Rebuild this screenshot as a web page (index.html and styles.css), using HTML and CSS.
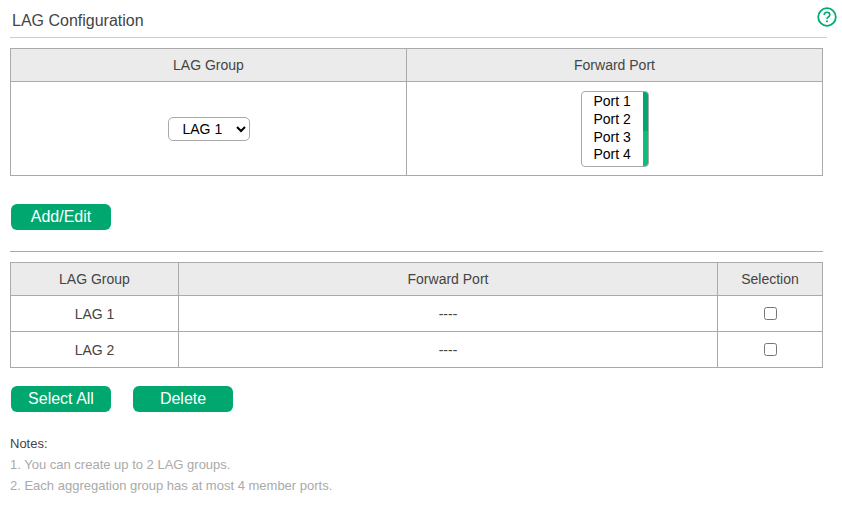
FILE: index.html
```html
<!DOCTYPE html>
<html>
    <head>
        <title>LAG Configuration</title>
        <meta charset="utf8"/>
        <link rel="stylesheet" href="styles.css">
    </head>
    <body>
        <div class="wrap">
            <div class="head">
                <h1>LAG Configuration</h1>
                <svg class="help" width="20" height="20" viewBox="0 0 20 20">
                    <circle cx="10" cy="10" r="8.8" fill="none" stroke="#00ab70" stroke-width="1.8"/>
                    <path d="M7.2 7.9c0-1.7 1.2-2.7 2.8-2.7s2.8 1 2.8 2.5c0 1.2-.7 1.8-1.5 2.3-.8.5-1.3 1-1.3 2" fill="none" stroke="#00ab70" stroke-width="1.6"/>
                    <rect x="9.1" y="13.4" width="1.8" height="1.8" fill="#00ab70"/>
                </svg>
            </div>
            <table class="form-table">
                <tr>
                    <th class="col-half">LAG Group</th>
                    <th>Forward Port</th>
                </tr>
                <tr>
                    <td>
                        <select class="lag-select">
                            <option>LAG 1</option>
                            <option>LAG 2</option>
                        </select>
                    </td>
                    <td>
                        <div class="port-list">
                            <ul>
                                <li>Port 1</li>
                                <li>Port 2</li>
                                <li>Port 3</li>
                                <li>Port 4</li>
                            </ul>
                            <div class="bar"><span class="thumb"></span><span class="track"></span></div>
                        </div>
                    </td>
                </tr>
            </table>
            <div class="btns btns-add">
                <button>Add/Edit</button>
            </div>
            <hr>
            <table class="list-table">
                <tr>
                    <th class="col-group">LAG Group</th>
                    <th>Forward Port</th>
                    <th class="col-sel">Selection</th>
                </tr>
                <tr>
                    <td>LAG 1</td>
                    <td>----</td>
                    <td><input type="checkbox"></td>
                </tr>
                <tr>
                    <td>LAG 2</td>
                    <td>----</td>
                    <td><input type="checkbox"></td>
                </tr>
            </table>
            <div class="btns btns-list">
                <button>Select All</button>
                <button>Delete</button>
            </div>
            <div class="notes">
                <p class="notes-title">Notes:</p>
                <p>1. You can create up to 2 LAG groups.</p>
                <p>2. Each aggregation group has at most 4 member ports.</p>
            </div>
        </div>
    </body>
</html>
```

FILE: styles.css
```css
*{
    box-sizing: border-box;
}
body,ul,li,h1,p,button{
    margin: 0px;
    padding: 0px;
    list-style: none;
    border: 0px;
}
body{
    background-color: #fff;
    font-family: "Liberation Sans", Arial, sans-serif;
    font-size: 14px;
    color: #444;
}
.wrap{
    width: 813px;
    margin-left: 10px;
    position: relative;
}
.head{
    width: 817px;
    height: 38px;
    padding: 12px 0 0 2px;
    border-bottom: 1px solid #ccc;
}
h1{
    font-size: 16px;
    font-weight: normal;
    line-height: 18px;
}
.help{
    position: absolute;
    top: 7px;
    left: 807px;
}
table{
    width: 813px;
    border-collapse: collapse;
    table-layout: fixed;
}
th,td{
    border: 1px solid #aaa;
    padding: 0px;
    text-align: center;
    font-weight: normal;
}
th{
    height: 33px;
    background-color: #ebebeb;
}
.form-table{
    margin-top: 10px;
}
.form-table td{
    height: 94px;
}
.col-half{
    width: 396px;
}
.lag-select{
    display: block;
    width: 82px;
    height: 24px;
    margin: 0 auto;
    padding-left: 10px;
    border: 1px solid #aaa;
    border-radius: 5px;
    background-color: #fff;
    font-family: "Liberation Sans", Arial, sans-serif;
    font-size: 14px;
    color: #000;
}
.port-list{
    display: flex;
    width: 68px;
    height: 76px;
    margin: 0 auto;
    border: 1px solid #aaa;
    border-radius: 4px;
    overflow: hidden;
}
.port-list ul{
    flex: 1;
    padding-top: 1.5px;
    text-align: left;
    padding-left: 12px;
    color: #000;
}
.port-list li{
    height: 17.8px;
    line-height: 17.8px;
}
.bar{
    display: flex;
    flex-direction: column;
    width: 5px;
}
.thumb{
    height: 39px;
    background-color: #00a870;
}
.track{
    flex: 1;
    background-color: #0cbf78;
}
.btns{
    display: flex;
    gap: 22px;
    padding-left: 1px;
}
.btns-add{
    margin-top: 28px;
}
.btns-list{
    margin-top: 18px;
}
button{
    width: 100px;
    height: 26px;
    border-radius: 6px;
    background-color: #00a870;
    color: #fff;
    font-family: "Liberation Sans", Arial, sans-serif;
    font-size: 16px;
}
hr{
    height: 1px;
    margin: 21px 0 10px;
    border: 0px;
    background-color: #aaa;
}
.col-group{
    width: 168px;
}
.col-sel{
    width: 105px;
}
.list-table td{
    height: 36px;
}
.list-table input{
    width: 13px;
    height: 13px;
    margin: 0 0 2px;
    vertical-align: middle;
}
.notes{
    margin-top: 21px;
    font-size: 13px;
    line-height: 21px;
    color: #aaa;
}
.notes-title{
    color: #444;
}
```
